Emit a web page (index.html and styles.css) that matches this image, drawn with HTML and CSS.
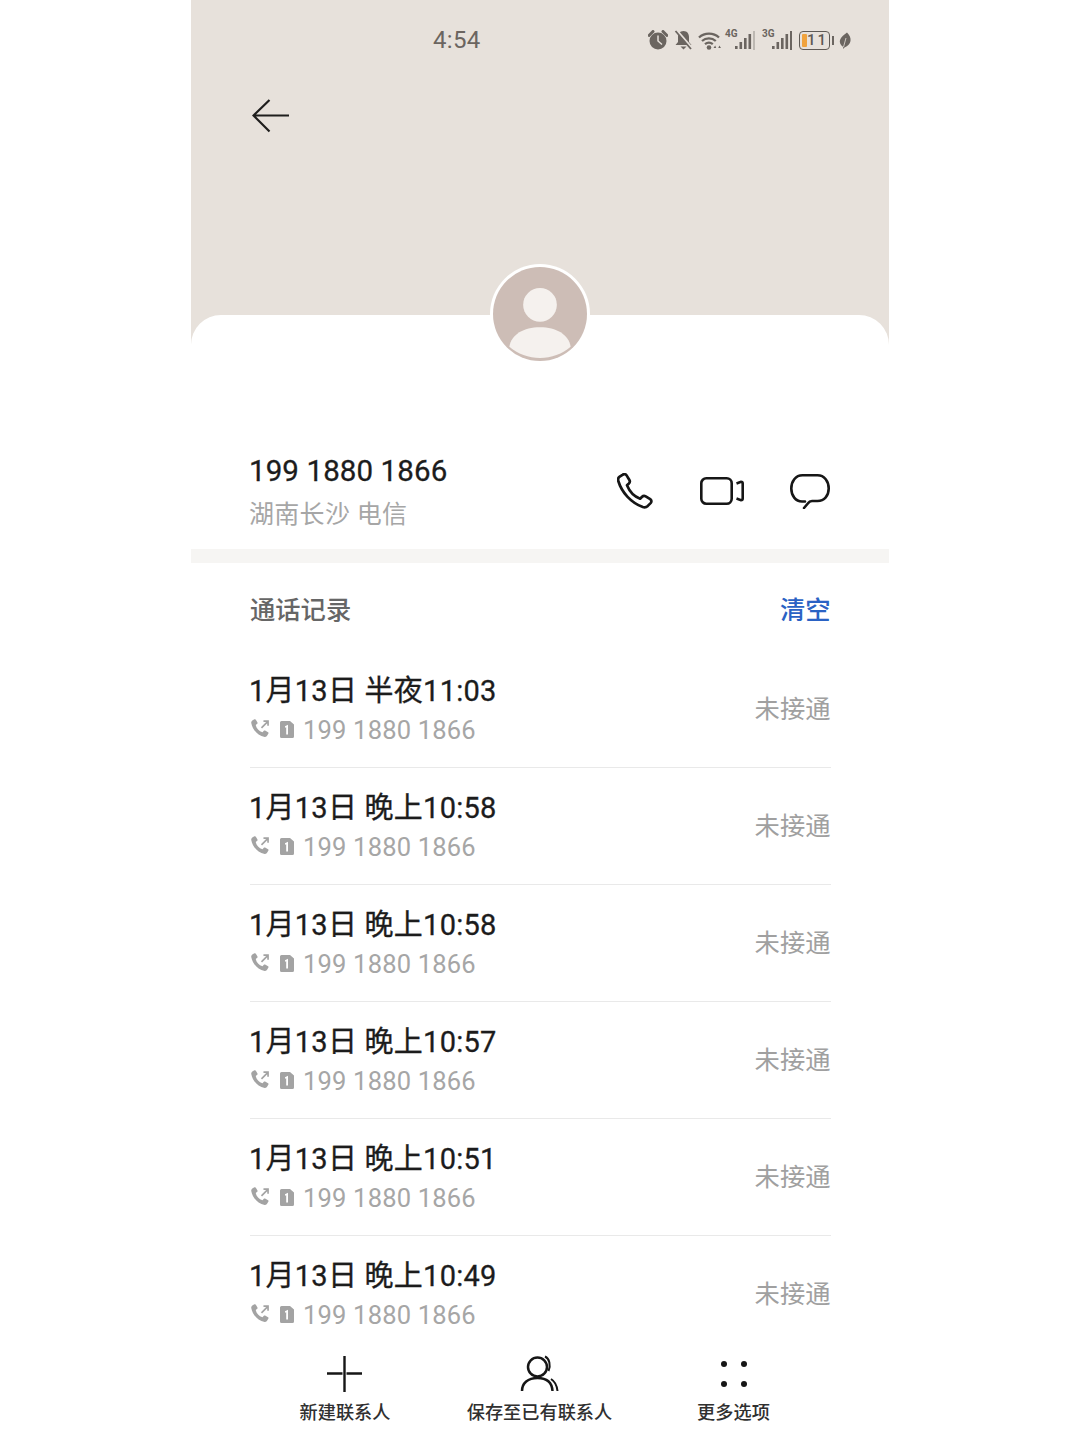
FILE: index.html
```html
<!DOCTYPE html>
<html lang="zh">
<head>
<meta charset="utf-8">
<title>通话记录</title>
<link rel="stylesheet" href="styles.css">
</head>
<body>
<svg class="defs" width="0" height="0" aria-hidden="true">
  <symbol id="call" viewBox="1.500 1 16.500 17">
    <path d="M3.200 2.300 5 1.200c.5-.2.9 0 1.100.3l1.500 2.500c.2.400.1.800-.2 1.100L6.100 6.100c.6 2.900 2.800 5.300 5.800 6.200l1.100-1.300c.3-.3.700-.4 1.100-.2l2.500 1.400c.4.200.5.700.3 1.100l-1 1.800c-.4.700-1.300 1.300-2.200 1.100C8 15.300 3.400 10.300 2.300 4.500c-.1-.9.300-1.800.9-2.200Z" fill="#a3a3a3"/>
    <path d="M11 8.500 16.500 3M12.700 2.800h3.900v3.900" fill="none" stroke="#a3a3a3" stroke-width="1.400"/>
  </symbol>
  <symbol id="sim" viewBox="0 0 14 17">
    <path d="M1.500 0H10l4 3.500V15.500A1.500 1.500 0 0 1 12.500 17h-11A1.500 1.500 0 0 1 0 15.500v-14A1.500 1.500 0 0 1 1.500 0Z" fill="#a3a3a3"/>
    <path d="M5 5.200 8 3.800V13.600H6.200V6.300L5 6.800Z" fill="#fff"/>
  </symbol>
  <symbol id="bars" viewBox="0 0 20 19">
    <rect x="0" y="15" width="2.600" height="3" fill="#6b6560"/>
    <rect x="4.500" y="11" width="2.600" height="7" fill="#6b6560"/>
    <rect x="9" y="7" width="2.600" height="11" fill="#6b6560"/>
    <rect x="13.500" y="3" width="2.600" height="15" fill="#6b6560"/>
  </symbol>
</svg>
<div class="phone">
  <header class="top">
    <div class="status">
      <span class="time">4:54</span>
      <div class="status-icons">
        <svg class="st-alarm" width="20" height="20" viewBox="0 0 20 20"><circle cx="10" cy="11" r="8.500" fill="#6b6560"/><path d="M10 5.500v5.500l4 3.500" fill="none" stroke="#e7e1db" stroke-width="1.500"/><path d="M1 5.500 5 1.500M19 5.500 15 1.500" stroke="#6b6560" stroke-width="3" stroke-linecap="round"/></svg>
        <svg class="st-bell" width="19" height="20" viewBox="0 0 19 20"><path d="M9.500 1c3.800 0 5.500 2.900 5.500 6v5l2.500 3h-16L4 12V7c0-3.100 1.700-6 5.500-6Z" fill="#6b6560"/><path d="M6.500 16.500h6L9.500 19.500Z" fill="#6b6560"/><path d="M2.500 0 18 18" stroke="#e7e1db" stroke-width="2.200"/><path d="M1.500 1 17 19" stroke="#6b6560" stroke-width="1.800"/></svg>
        <svg class="st-wifi" width="23" height="19" viewBox="0 0 23 19"><path d="M1 6.500C6.500 1.300 15.500 1.300 21 6.500M4 10c3.900-3.500 9.900-3.500 13.800 0M7 13.200c2.300-1.900 5.500-1.900 7.800 0" fill="none" stroke="#6b6560" stroke-width="2.300"/><circle cx="11" cy="16.500" r="2.300" fill="#6b6560"/><path d="M15.500 17h2.700l-1-2.500ZM23 17h-2.700l1-2.500Z" fill="#6b6560"/></svg>
        <div class="signal"><span class="net">4G</span><svg class="bars" width="20" height="19"><use href="#bars"/></svg><span class="bar-dim"></span></div>
        <div class="signal signal-b"><span class="net">3G</span><svg class="bars" width="20" height="19"><use href="#bars"/></svg><span class="bar-full"></span></div>
        <div class="battery"><span class="batt-fill"></span><span class="batt-num">11</span></div>
        <span class="batt-nub"></span>
        <svg class="st-leaf" width="12" height="17" viewBox="0 0 12 17"><path d="M8 .5C10.500 3 12 6 11.500 9c-.5 3-2.500 5-6 6.500L4 17l.2-2C1.500 13 .2 10.500 1 8 1.800 5 5 3 8 .5Z" fill="#6b6560"/><path d="M4.500 15 7 6" stroke="#e7e1db" stroke-width=".8"/></svg>
      </div>
    </div>
    <svg class="back" width="38" height="34" viewBox="0 0 38 34"><path d="M17.500 1 1.500 16.500 17.500 32.500M1.500 16.500H37" fill="none" stroke="#1f1e1d" stroke-width="2.200"/></svg>
  </header>

  <main class="sheet">
    <div class="avatar">
      <svg width="94" height="94" viewBox="0 0 92 92"><circle cx="46" cy="46" r="46" fill="#cdbdb6"/><circle cx="46" cy="37" r="16.500" fill="#f5f1ee"/><path d="M16 78c2-12 14-19 30-19s28 7 30 19c-8 7-19 11-30 11s-22-4-30-11Z" fill="#f5f1ee"/></svg>
    </div>

    <section class="contact">
      <div class="contact-text">
        <div class="number">199 1880 1866</div>
        <div class="place">湖南长沙 电信</div>
      </div>
      <div class="actions">
        <svg class="act-call" width="36" height="36" viewBox="0 0 36 36"><path d="M5.500 1.800 2.700 3.600C1.300 4.600.8 6.300 1.300 8c3.500 11.700 13 21.800 24.500 26 1.800.6 3.500.3 5-1.100l2.800-2.800c1.200-1.300 1-3-.4-4l-4.500-2.800c-1.200-.7-2.600-.6-3.600.4l-2 2C17 23.500 12.500 18.500 10 12.300l1.900-1.800c1-1 1.200-2.300.5-3.500L9.600 2.400C8.800 1.100 6.900.8 5.500 1.800Z" fill="none" stroke="#161616" stroke-width="2.700" stroke-linejoin="round"/></svg>
        <svg class="act-video" width="44" height="28" viewBox="0 0 44 28"><rect x="1.300" y="1.300" width="30.400" height="25.400" rx="5" fill="none" stroke="#161616" stroke-width="2.600"/><path d="M36.500 6.500 41 4.800c1 0 1.700.6 1.700 1.600v15.200c0 1-.7 1.600-1.700 1.600l-4.500-1.700" fill="none" stroke="#161616" stroke-width="2.600"/></svg>
        <svg class="act-chat" width="40" height="35" viewBox="0 0 40 35"><path d="M15 27.500H12C5.500 27.500 1.300 21.500 1.300 14.500S5.500 1.300 12.500 1.300h15C34.500 1.300 38.700 7.500 38.700 14.500S34.500 27 27.500 27h-5.500c-2 0-3.200 1-4.200 2.500L14 34" fill="none" stroke="#161616" stroke-width="2.600" stroke-linecap="round"/></svg>
      </div>
    </section>

    <div class="band"></div>

    <section class="log">
      <div class="log-head">
        <span class="log-title">通话记录</span>
        <span class="log-clear">清空</span>
      </div>
      <div class="rows">
        <div class="row"><div class="row-main"><div class="row-time">1月13日 半夜11:03</div><div class="row-sub"><svg class="i-call" width="20" height="20"><use href="#call"/></svg><svg class="i-sim" width="14" height="17"><use href="#sim"/></svg><span>199 1880 1866</span></div></div><span class="row-state">未接通</span></div>
        <div class="row"><div class="row-main"><div class="row-time">1月13日 晚上10:58</div><div class="row-sub"><svg class="i-call" width="20" height="20"><use href="#call"/></svg><svg class="i-sim" width="14" height="17"><use href="#sim"/></svg><span>199 1880 1866</span></div></div><span class="row-state">未接通</span></div>
        <div class="row"><div class="row-main"><div class="row-time">1月13日 晚上10:58</div><div class="row-sub"><svg class="i-call" width="20" height="20"><use href="#call"/></svg><svg class="i-sim" width="14" height="17"><use href="#sim"/></svg><span>199 1880 1866</span></div></div><span class="row-state">未接通</span></div>
        <div class="row"><div class="row-main"><div class="row-time">1月13日 晚上10:57</div><div class="row-sub"><svg class="i-call" width="20" height="20"><use href="#call"/></svg><svg class="i-sim" width="14" height="17"><use href="#sim"/></svg><span>199 1880 1866</span></div></div><span class="row-state">未接通</span></div>
        <div class="row"><div class="row-main"><div class="row-time">1月13日 晚上10:51</div><div class="row-sub"><svg class="i-call" width="20" height="20"><use href="#call"/></svg><svg class="i-sim" width="14" height="17"><use href="#sim"/></svg><span>199 1880 1866</span></div></div><span class="row-state">未接通</span></div>
        <div class="row"><div class="row-main"><div class="row-time">1月13日 晚上10:49</div><div class="row-sub"><svg class="i-call" width="20" height="20"><use href="#call"/></svg><svg class="i-sim" width="14" height="17"><use href="#sim"/></svg><span>199 1880 1866</span></div></div><span class="row-state">未接通</span></div>
      </div>
    </section>
  </main>

  <nav class="tabbar">
    <div class="tab tab-new">
      <svg width="38" height="38" viewBox="0 0 38 38"><path d="M18.500 1V37M1 18.500H16.500M20.500 18.500H36" fill="none" stroke="#161616" stroke-width="2.400"/></svg>
      <span>新建联系人</span>
    </div>
    <div class="tab tab-save">
      <svg width="40" height="38" viewBox="0 0 40 38"><circle cx="17.500" cy="12" r="9.500" fill="none" stroke="#161616" stroke-width="2.500"/><path d="M2 36c0-8 6-13 15.500-13S32 28 32.500 36" fill="none" stroke="#161616" stroke-width="2.500"/><path d="M25 1.500c4.500 2 6 9 3.500 14.500M31 24c4 2.500 6 6.500 6.500 12" fill="none" stroke="#161616" stroke-width="2"/></svg>
      <span>保存至已有联系人</span>
    </div>
    <div class="tab tab-more">
      <div class="dots"><i></i><i></i><i></i><i></i></div>
      <span>更多选项</span>
    </div>
  </nav>
</div>
</body>
</html>
```

FILE: styles.css
```css
* { box-sizing: border-box; }
html, body { margin: 0; padding: 0; background: #fff; }
body {
  font-family: Roboto, "Noto Sans CJK SC", sans-serif;
  color: #1c1c1c;
  height: 1439px;
  overflow: hidden;
}
.defs { position: absolute; }
.phone {
  width: 698px;
  height: 1439px;
  margin: 0 auto;
  display: flex;
  flex-direction: column;
  background: #fff;
  overflow: hidden;
  position: relative;
}

/* header */
.top {
  height: 345px;
  flex: none;
  background: #e7e1db;
  padding-top: 28px;
}
.status {
  height: 24px;
  display: flex;
  align-items: center;
  padding: 0 38px 0 242px;
  justify-content: space-between;
}
.time {
  font-size: 24px;
  line-height: 26px;
  letter-spacing: 0.300px;
  color: #6b6560;
}
.status-icons {
  display: flex;
  align-items: center;
  height: 20px;
  margin-left: -2px;
}
.status-icons svg { flex: none; display: block; }
.st-bell { margin-left: 6px; }
.st-wifi { margin-left: 5px; }
.signal {
  display: flex;
  align-items: flex-end;
  position: relative;
  margin-left: 4px;
  height: 19px;
  padding-left: 10px;
}
.signal-b { margin-left: 7px; }
.net {
  position: absolute;
  left: 0;
  top: -2px;
  font-size: 10px;
  line-height: 10px;
  font-weight: 700;
  color: #6b6560;
}
.bar-dim, .bar-full {
  display: block;
  width: 2px;
  height: 19px;
  margin-left: -2px;
}
.bar-dim { background: #bdb8b2; }
.bar-full { background: #6b6560; }
.battery {
  width: 31px;
  height: 19px;
  margin-left: 7px;
  border: 1.500px solid #5f5a55;
  border-radius: 4px;
  display: flex;
  align-items: center;
  padding-left: 2px;
  gap: 2px;
}
.batt-fill {
  width: 5px;
  height: 13px;
  background: #f0a23c;
  border-radius: 1px;
}
.batt-num {
  font-size: 15px;
  line-height: 15px;
  letter-spacing: 2px;
  font-weight: 500;
  color: #5f5a55;
  margin-left: -2px;
}
.batt-nub {
  width: 2px;
  height: 9px;
  margin-left: 2px;
  background: #6b6560;
}
.st-leaf { margin-left: 5px; }
.back {
  display: block;
  margin: 47px 0 0 61px;
}

/* sheet */
.sheet {
  flex: 1;
  min-height: 0;
  margin-top: -30px;
  background: #fff;
  border-radius: 30px 30px 0 0;
  position: relative;
  overflow: visible;
}
.avatar {
  position: absolute;
  left: 299px;
  top: -51px;
  width: 100px;
  height: 100px;
  border-radius: 50%;
  background: #fff;
  display: flex;
  align-items: center;
  justify-content: center;
}
.avatar svg { display: block; }
.contact {
  height: 234px;
  padding: 0 59px 0 59px;
  display: flex;
  align-items: flex-end;
  justify-content: space-between;
}
.contact-text { padding-bottom: 14px; margin-left: -1px; }
.number {
  font-size: 29.500px;
  line-height: 40px;
  font-weight: 400;
  letter-spacing: 0.100px;
  -webkit-text-stroke: 0.300px #1c1c1c;
  color: #1c1c1c;
}
.place {
  font-size: 25px;
  line-height: 40px;
  margin-top: 4px;
  letter-spacing: 0.300px;
  color: #a6a6a6;
}
.actions {
  display: flex;
  align-items: center;
  padding-bottom: 40px;
}
.actions svg { display: block; }
.act-video { margin-left: 47px; }
.act-chat { margin-left: 46px; }
.band {
  height: 14px;
  background: #f6f5f3;
}
.log-head {
  height: 88px;
  padding: 28px 58.500px 0 59px;
  display: flex;
  justify-content: space-between;
  align-items: flex-start;
  font-size: 25.300px;
  line-height: 40px;
  font-weight: 500;
}
.log-title { color: #666; }
.log-clear { color: #2a62c4; }
.rows {
  padding: 0 58.500px 0 59px;
  height: 684px;
  overflow: hidden;
}
.row {
  height: 117px;
  padding-top: 20px;
  display: flex;
  justify-content: space-between;
  align-items: flex-start;
  border-bottom: 1px solid #e9e9e9;
}
.row-time {
  font-size: 29px;
  line-height: 40px;
  font-weight: 400;
  letter-spacing: 0.250px;
  -webkit-text-stroke: 0.300px #1c1c1c;
  color: #1c1c1c;
  white-space: nowrap;
  margin-left: -1px;
}
.row-sub {
  height: 40px;
  margin-top: -1px;
  display: flex;
  align-items: center;
  font-size: 25.500px;
  letter-spacing: 0.200px;
  color: #a6a6a6;
  white-space: nowrap;
}
.i-call { margin-right: 10px; margin-top: -2px; flex: none; }
.i-sim { margin-right: 9px; margin-top: -2px; flex: none; }
.row-state {
  font-size: 25.300px;
  line-height: 40px;
  margin-top: 19px;
  color: #a0a0a0;
}

/* bottom bar */
.tabbar {
  position: absolute;
  left: 0;
  right: 0;
  bottom: 0;
  height: 104px;
  background: #fff;
  display: grid;
  grid-template-columns: 196px 193px 195px;
  justify-content: start;
  padding-left: 56px;
}
.tab {
  display: flex;
  flex-direction: column;
  align-items: center;
  justify-content: flex-start;
  padding-top: 20px;
}
.tab svg { display: block; height: 38px; }
.tab span {
  margin-top: 7px;
  font-size: 18.200px;
  line-height: 26px;
  font-weight: 500;
  color: #303030;
  white-space: nowrap;
}
.dots {
  width: 26px;
  height: 38px;
  display: grid;
  grid-template-columns: 6px 6px;
  justify-content: space-between;
  align-content: center;
  row-gap: 14px;
}
.dots i {
  width: 6px;
  height: 6px;
  border-radius: 50%;
  background: #161616;
}
```
